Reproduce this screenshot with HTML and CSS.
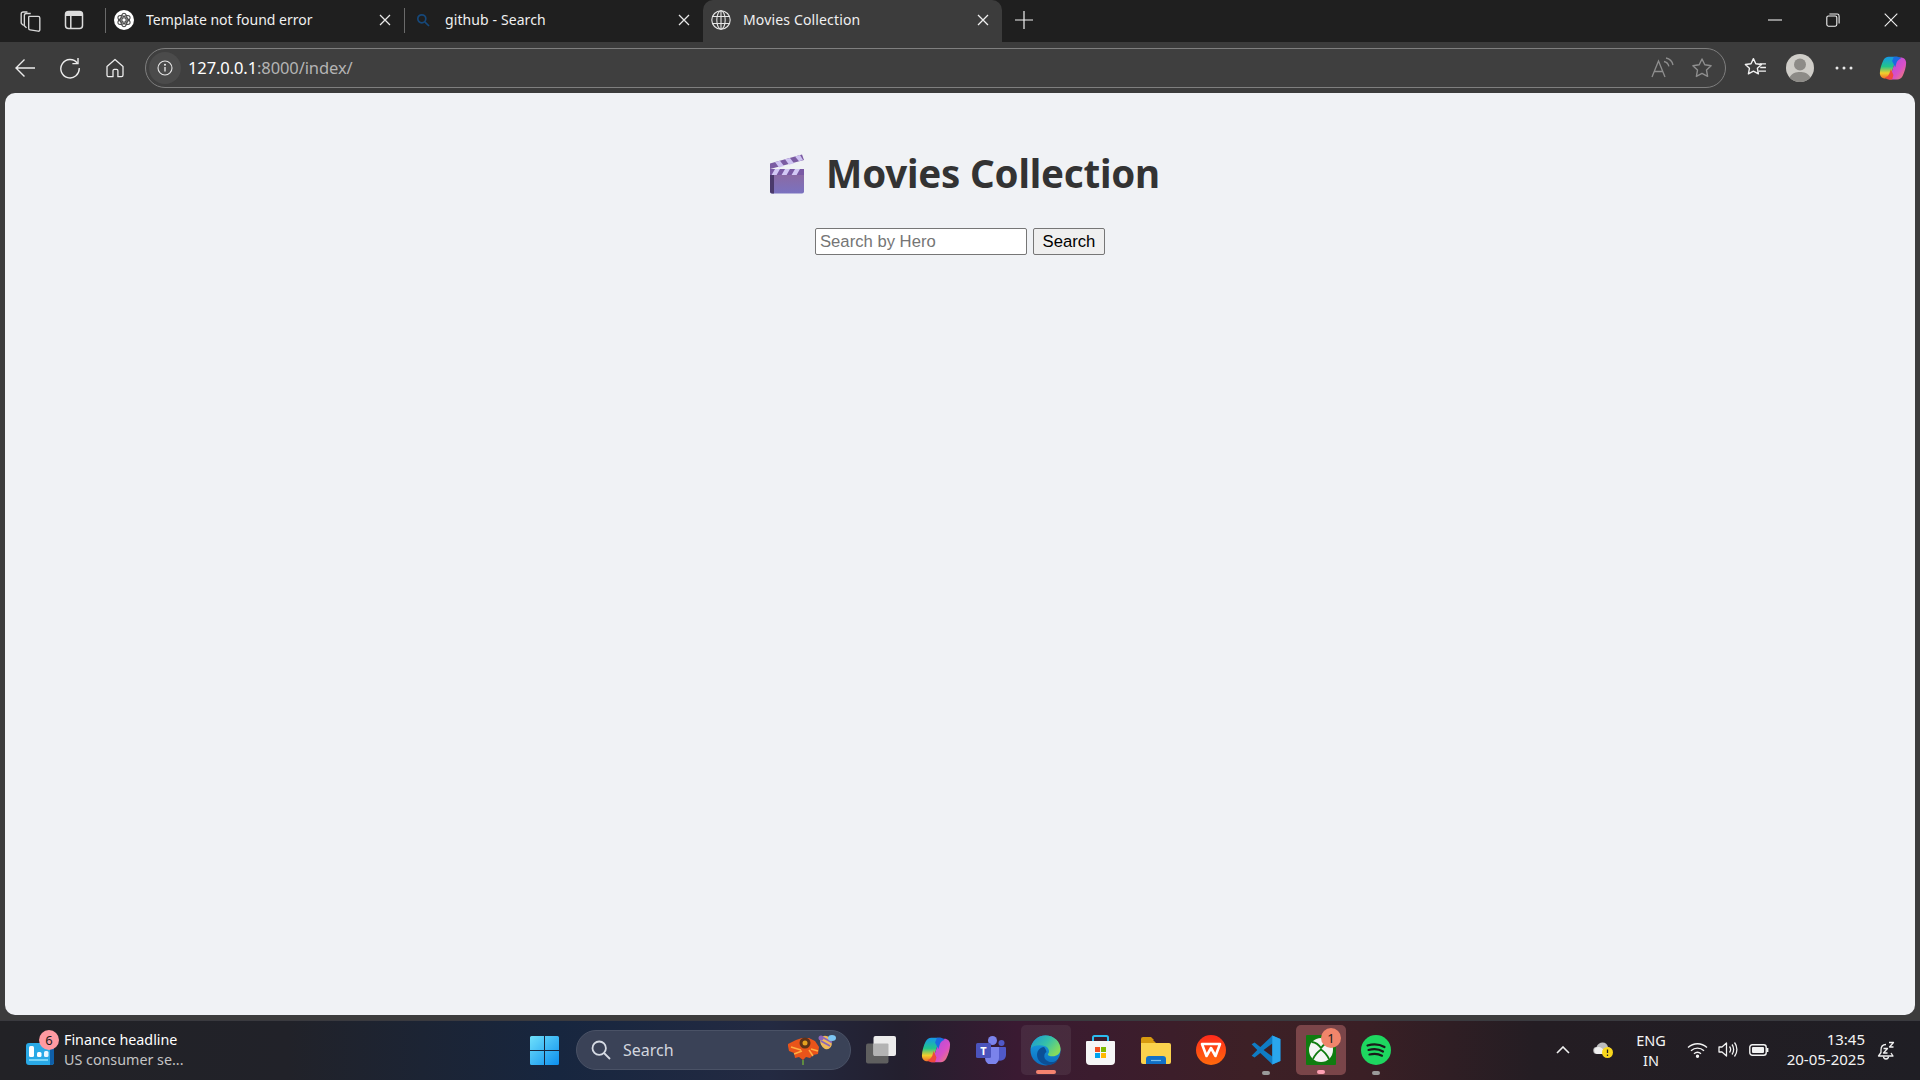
FILE: index.html
```html
<!DOCTYPE html>
<html lang="en">
<head>
<meta charset="utf-8">
<title>Movies Collection</title>
<link rel="stylesheet" href="styles.css">
</head>
<body>
<div class="screen">
  <header class="tabstrip">
    <div class="strip-tools">
      <button class="icon-btn w46"><svg width="25" height="25" viewBox="0 0 22 22" fill="none" stroke="#d8d8d8" stroke-width="1.2" stroke-linejoin="round"><path d="M5 15.5 3.2 13.8a1.4 1.4 0 0 1-.4-1V5.2c0-1 .7-1.700 1.700-1.700h3.800"/><path d="M7.500 17.500 5.600 15.600V6.500c0-1 .7-1.700 1.700-1.700h3.900"/><path d="M9.600 7.400h8.200c.9 0 1.400.5 1.400 1.400v10.300c0 .9-.7 1.400-1.500 1.300l-7-1.100c-.8-.1-1.300-.7-1.300-1.500V8.800c0-.9.1-1.400.2-1.400z"/></svg></button>
      <button class="icon-btn w40"><svg width="20" height="20" viewBox="0 0 20 20"><rect x="1.500" y="1.500" width="17" height="17" rx="3" fill="none" stroke="#dcdcdc" stroke-width="1.500"/><path d="M2 2h16v4H2z" fill="#dcdcdc"/><path d="M6.800 6v12" stroke="#dcdcdc" stroke-width="1.500"/></svg></button>
      <span class="tab-sep first"></span>
    </div>
    <div class="tab tab-one">
      <svg class="favicon" width="20" height="20" viewBox="0 0 20 20"><circle cx="10" cy="10" r="10" fill="#fff"/><g fill="none" stroke="#4a4a4a" stroke-width="1.100"><ellipse cx="10" cy="10" rx="3.300" ry="6.800"/><ellipse cx="10" cy="10" rx="3.300" ry="6.800" transform="rotate(60 10 10)"/><ellipse cx="10" cy="10" rx="3.300" ry="6.800" transform="rotate(120 10 10)"/><circle cx="10" cy="10" r="2.200"/></g></svg>
      <span class="tab-title">Template not found error</span>
      <svg class="tab-close" width="12" height="12" viewBox="0 0 12 12"><path d="M1 1l10 10M11 1 1 11" stroke="#e8e8e8" stroke-width="1.300"/></svg>
    </div>
    <span class="tab-sep"></span>
    <div class="tab tab-two">
      <svg class="favicon-s" width="14" height="14" viewBox="0 0 14 14" fill="none" stroke="#16487a" stroke-width="1.700"><circle cx="5.800" cy="5.800" r="4"/><path d="M8.800 8.800 13 13"/></svg>
      <span class="tab-title">github - Search</span>
      <svg class="tab-close" width="12" height="12" viewBox="0 0 12 12"><path d="M1 1l10 10M11 1 1 11" stroke="#e8e8e8" stroke-width="1.300"/></svg>
    </div>
    <div class="tab tab-active">
      <svg class="favicon" width="20" height="20" viewBox="0 0 20 20" fill="none" stroke="#e6e6e6" stroke-width="1.100"><circle cx="10" cy="10" r="9.200"/><ellipse cx="10" cy="10" rx="4.200" ry="9.200"/><path d="M10 .8v18.400M1.600 6.500h16.800M1.600 13.500h16.800"/></svg>
      <span class="tab-title">Movies Collection</span>
      <svg class="tab-close" width="12" height="12" viewBox="0 0 12 12"><path d="M1 1l10 10M11 1 1 11" stroke="#f0f0f0" stroke-width="1.300"/></svg>
    </div>
    <button class="icon-btn new-tab"><svg width="18" height="18" viewBox="0 0 18 18"><path d="M9 0v18M0 9h18" stroke="#f0f0f0" stroke-width="1.200"/></svg></button>
    <div class="window-controls">
      <button class="icon-btn win"><svg width="14" height="2" viewBox="0 0 14 2"><path d="M0 1h14" stroke="#fff" stroke-width="1"/></svg></button>
      <button class="icon-btn win"><svg width="14" height="14" viewBox="0 0 14 14" fill="none" stroke="#f2f2f2" stroke-width="1.100"><rect x=".8" y="3" width="10" height="10.200" rx="1.600"/><path d="M3.400 1h7.800c1 0 1.900.8 1.900 1.900v7.600"/></svg></button>
      <button class="icon-btn win"><svg width="14" height="14" viewBox="0 0 14 14"><path d="M.7.7l12.600 12.600M13.300.7.7 13.300" stroke="#f2f2f2" stroke-width="1.100"/></svg></button>
    </div>
  </header>

  <nav class="toolbar">
    <button class="icon-btn nav"><svg width="22" height="20" viewBox="0 0 22 20" fill="none" stroke="#ececec" stroke-width="1.400"><path d="M21 10H2M10.500 1.500 2 10l8.500 8.500"/></svg></button>
    <button class="icon-btn nav"><svg width="22" height="22" viewBox="0 0 22 22" fill="none" stroke="#ececec" stroke-width="1.400"><path d="M18.400 6.200A9.200 9.200 0 1 0 20.200 11"/><path d="M19 1v5.600h-5.600"/></svg></button>
    <button class="icon-btn nav"><svg width="20" height="20" viewBox="0 0 20 20" fill="none" stroke="#ececec" stroke-width="1.300" stroke-linejoin="round"><path d="M2 8.400 10 1.500l8 6.900v8.700c0 .9-.7 1.600-1.500 1.600h-3.600v-6a1.300 1.300 0 0 0-1.300-1.300H9.400A1.300 1.300 0 0 0 8 12.700v6H3.500c-.8 0-1.500-.7-1.500-1.600z"/></svg></button>
    <div class="address">
      <span class="info"><svg width="16" height="16" viewBox="0 0 16 16" fill="none" stroke="#e6e6e6" stroke-width="1.100"><circle cx="8" cy="8" r="7"/><path d="M8 7v4.500" stroke-width="1.400"/><circle cx="8" cy="4.700" r=".5" fill="#e6e6e6"/></svg></span>
      <span class="url"><span class="url-host">127.0.0.1</span>:8000/index/</span>
      <span class="addr-actions">
        <svg class="read" width="24" height="22" viewBox="0 0 24 22" fill="none" stroke="#8e8e8e" stroke-width="1.300"><path d="M2 20 8.500 4 15 20M4.500 14.500h8"/><path d="M14 4.500c2.500.6 4.300 2.400 4.900 4.900M16 1c4 .8 6.200 3.200 7 7"/></svg>
        <svg width="22" height="22" viewBox="0 0 22 22" fill="none" stroke="#8e8e8e" stroke-width="1.400" stroke-linejoin="round"><path d="M11 2l2.800 5.800 6.300.9-4.600 4.400 1.100 6.300L11 16.400l-5.600 3 1.100-6.300L1.900 8.700l6.300-.9z"/></svg>
      </span>
    </div>
    <button class="icon-btn fav"><svg width="23" height="21" viewBox="0 0 22 20" fill="none" stroke="#f2f2f2" stroke-width="1.300" stroke-linejoin="round"><path d="M9 1.500l2.300 4.900 5.400.7-3.900 3.700 1 5.300L9 13.500l-4.800 2.600 1-5.300L1.300 7.100l5.400-.7z"/><path d="M15 6.500h6M15.500 10h5.500M14 13.500h7"/></svg></button>
    <span class="avatar"><svg width="28" height="28" viewBox="0 0 28 28"><circle cx="14" cy="14" r="14" fill="#cfcdc8"/><circle cx="14" cy="10.500" r="6" fill="#8d8b87"/><path d="M3.500 23.500C6 19 10 18 14 18s8 1 10.500 5.500A14 14 0 0 1 14 28 14 14 0 0 1 3.500 23.500z" fill="#8d8b87"/></svg></span>
    <button class="icon-btn dots"><svg width="18" height="4" viewBox="0 0 18 4" fill="#e8e8e8"><circle cx="2" cy="2" r="1.500"/><circle cx="9" cy="2" r="1.500"/><circle cx="16" cy="2" r="1.500"/></svg></button>
    <span class="copilot-wrap">
      <svg width="28" height="28" viewBox="0 0 32 32"><defs><linearGradient id="cpa" x1="0" y1="0" x2="0" y2="1"><stop offset="0" stop-color="#1697e8"/><stop offset=".45" stop-color="#22c58b"/><stop offset=".75" stop-color="#f2cf2c"/><stop offset="1" stop-color="#f0702a"/></linearGradient><linearGradient id="cpb" x1="0" y1="0" x2="1" y2="1"><stop offset="0" stop-color="#a64fe0"/><stop offset=".6" stop-color="#d94fc8"/><stop offset="1" stop-color="#f08a5c"/></linearGradient></defs><path d="M11 3h10l-2 4-5 15c-1.500 4-3.500 6-7 6-3.500 0-6-2.500-6-6 0-5 2-11 4-15 1.200-2.500 3.500-4 6-4z" fill="url(#cpa)"/><path d="M21 29H11l2-4 5-15c1.500-4 3.500-6 7-6 3.500 0 6 2.500 6 6 0 5-2 11-4 15-1.200 2.500-3.500 4-6 4z" fill="url(#cpb)"/><path d="M17 3h4c1.800 0 3.400 1 4 2.400-2.500.4-4 2.300-5 4.600l-1.500 5L15 8z" fill="#1b6be0"/><path d="M15 29h-4c-1.800 0-3.400-1-4-2.400 2.500-.4 4-2.300 5-4.600l1.500-5 3 7z" fill="#ef4a3c"/></svg>
    </span>
  </nav>

  <div class="viewport">
    <main class="page">
      <h1 class="title">
        <svg class="clapper" width="34" height="40" viewBox="0 0 34 40"><defs><linearGradient id="clb" x1="0" y1="0" x2="0" y2="1"><stop offset="0" stop-color="#8a6aa4"/><stop offset="1" stop-color="#7a72c0"/></linearGradient></defs><path d="M0 9.500 32 .5l2 5.500L0 15z" fill="#7b5ba2"/><path d="M5 8.100l5-1.400 4 5.400-5 1.400zM15 5.300l5-1.400 4 5.400-5 1.400zM25 2.500l5-1.400 3 4.800-4 1.400z" fill="#cfc3f2"/><path d="M0 15h34v7H0z" fill="#7a5aa4"/><path d="M5 15h5l-4 7H1zM15 15h5l-4 7h-5zM25 15h5l-4 7h-5z" fill="#d3c8f5"/><path d="M0 21h34v16.500a2 2 0 0 1-2 2H2a2 2 0 0 1-2-2z" fill="url(#clb)"/><path d="M0 21h4v18.500H2a2 2 0 0 1-2-2z" fill="#4b3a6c"/></svg>
        <span>Movies Collection</span>
      </h1>
      <form class="search-form">
        <input class="search-input" type="text" placeholder="Search by Hero">
        <button class="search-btn" type="button">Search</button>
      </form>
    </main>
  </div>

  <footer class="taskbar">
    <div class="tb-left">
      <span class="widget-icon">
        <svg width="28" height="22" viewBox="0 0 28 22"><rect width="28" height="22" rx="3" fill="#29a9e6"/><path d="M24 0h1a3 3 0 0 1 3 3v16a3 3 0 0 1-3 3h-1z" fill="#0f5fa8"/><rect x="3" y="3" width="5" height="11" rx="1.500" fill="#fff"/><rect x="11" y="9" width="4.500" height="5" rx="1.500" fill="#fff"/><rect x="18" y="8" width="4.500" height="6" rx="1.500" fill="#e8f6ff"/><rect x="3" y="16" width="19" height="2" fill="#79d5f7"/></svg>
        <span class="badge badge-six">6</span>
      </span>
      <span class="news">
        <span class="news-head">Finance headline</span>
        <span class="news-sub">US consumer se...</span>
      </span>
    </div>
    <div class="tb-center">
      <span class="tb-item"><svg width="29" height="29" viewBox="0 0 29 29"><defs><linearGradient id="winl" x1="0" y1="0" x2="1" y2="1"><stop offset="0" stop-color="#6fe0fb"/><stop offset="1" stop-color="#0c8fee"/></linearGradient></defs><path d="M0 1.500A1.500 1.500 0 0 1 1.500 0H14v14H0zM15 0h12.500A1.500 1.500 0 0 1 29 1.500V14H15zM0 15h14v14H1.500A1.500 1.500 0 0 1 0 27.500zM15 15h14v12.500a1.500 1.500 0 0 1-1.500 1.500H15z" fill="url(#winl)"/></svg></span>
      <div class="tb-search">
        <svg width="20" height="20" viewBox="0 0 20 20" fill="none" stroke="#d6dbe4" stroke-width="1.800"><circle cx="8.200" cy="8.200" r="6.700"/><path d="M13 13l6 6"/></svg>
        <span class="tb-search-text">Search</span>
        <svg class="tb-search-art" width="50" height="30" viewBox="0 0 50 30"><path d="M0 9 8 5l6-2h7l6 3 4 6 -1 7-5 1-3 3-4-1-3 3-4-3-4 1-1-5-5-2-1-5z" fill="#e9541a"/><path d="M3 12l10 3M6 19l8-3M25 21l-4-6M30 16l-7-2" stroke="#ffae42" stroke-width="1.500"/><circle cx="17" cy="8" r="5.500" fill="#5e3218"/><circle cx="17" cy="8" r="2.500" fill="#e5a21f"/><path d="M15 25v5" stroke="#6da53a" stroke-width="1.500"/><ellipse cx="38" cy="7.500" rx="5.500" ry="7" fill="#efb95a" transform="rotate(-25 38 7.500)"/><path d="M33 6l9 5M35 2.500l9 5" stroke="#8a66bb" stroke-width="1.800"/><ellipse cx="44" cy="3" rx="4" ry="3" fill="#7cc5f2"/><circle cx="33" cy="3" r="2.500" fill="#8a66bb"/></svg>
      </div>
      <span class="tb-item tb-view"><svg width="30" height="28" viewBox="0 0 30 28"><rect x="0" y="7.500" width="22.500" height="20" rx="2" fill="#5f5f5f"/><rect x="7.500" y="0" width="22.500" height="20" rx="2" fill="#ececec"/><rect x="7.500" y="7.500" width="15" height="12.500" rx="1" fill="#b3b3b3"/></svg></span>
      <span class="tb-item"><svg width="30" height="30" viewBox="0 0 32 32"><defs><linearGradient id="cpc" x1="0" y1="0" x2="0" y2="1"><stop offset="0" stop-color="#1697e8"/><stop offset=".45" stop-color="#22c58b"/><stop offset=".75" stop-color="#f2cf2c"/><stop offset="1" stop-color="#f0702a"/></linearGradient><linearGradient id="cpd" x1="0" y1="0" x2="1" y2="1"><stop offset="0" stop-color="#a64fe0"/><stop offset=".6" stop-color="#d94fc8"/><stop offset="1" stop-color="#f08a5c"/></linearGradient></defs><path d="M11 3h10l-2 4-5 15c-1.500 4-3.500 6-7 6-3.500 0-6-2.500-6-6 0-5 2-11 4-15 1.200-2.500 3.500-4 6-4z" fill="url(#cpc)"/><path d="M21 29H11l2-4 5-15c1.500-4 3.500-6 7-6 3.500 0 6 2.500 6 6 0 5-2 11-4 15-1.200 2.500-3.500 4-6 4z" fill="url(#cpd)"/><path d="M17 3h4c1.800 0 3.400 1 4 2.400-2.500.4-4 2.300-5 4.600l-1.500 5L15 8z" fill="#1b6be0"/><path d="M15 29h-4c-1.800 0-3.400-1-4-2.400 2.500-.4 4-2.300 5-4.600l1.500-5 3 7z" fill="#ef4a3c"/></svg></span>
      <span class="tb-item"><svg width="30" height="28" viewBox="0 0 30 28"><circle cx="16.500" cy="4.500" r="4.500" fill="#7b83eb"/><circle cx="25.500" cy="7" r="3" fill="#5059c9"/><path d="M21 11h8a1 1 0 0 1 1 1v7a6 6 0 0 1-9 5z" fill="#5059c9"/><path d="M9 11h14v11a7 7 0 0 1-14 0z" fill="#7b83eb"/><rect x="0" y="7" width="15" height="15" rx="1.500" fill="#4b53bc"/><text x="7.500" y="19" class="teams-t">T</text></svg></span>
      <span class="tb-item tb-active">
        <svg width="31" height="31" viewBox="0 0 32 32"><defs><linearGradient id="eg" x1="0" y1="0" x2="1" y2=".6"><stop offset="0" stop-color="#1a95d8"/><stop offset=".55" stop-color="#35c1a8"/><stop offset="1" stop-color="#86dc5c"/></linearGradient><linearGradient id="eb" x1="0" y1="0" x2="0" y2="1"><stop offset="0" stop-color="#1ca4e4"/><stop offset="1" stop-color="#0b6ec0"/></linearGradient></defs><circle cx="16" cy="16" r="15.500" fill="url(#eb)"/><path d="M.8 14C2 6 8 .5 16 .5c9 0 15.500 6.500 15.500 14 0 5-4 7.500-8 7.500-3 0-5.500-1-5-2.500 2-1.500 1.500-6-2.500-8C11 10 3 10 .8 14z" fill="url(#eg)"/><path d="M14.500 12.500c-5 .5-8 5-7 10 1 5 6 9 12.500 8.500 3.500-.5 6.500-2 8.500-5-3 2-7 2.500-10 1-3-1.500-4.500-4-3.500-7 .3-1 1-2 2-2.500-.5-2-1.500-4-2.500-5z" fill="#0b4f96"/></svg>
        <span class="run-bar run-edge"></span>
      </span>
      <span class="tb-item"><svg width="29" height="30" viewBox="0 0 29 30"><path d="M7 6V2.500A1.500 1.500 0 0 1 8.500 1h12A1.500 1.500 0 0 1 22 2.500V6" fill="none" stroke="#2bbcf0" stroke-width="2"/><path d="M1 6h27a1 1 0 0 1 1 1v19a4 4 0 0 1-4 4H4a4 4 0 0 1-4-4V7a1 1 0 0 1 1-1z" fill="#f6f6f6"/><path d="M9 12h5v5H9z" fill="#f25022"/><path d="M15 12h5v5h-5z" fill="#7fba00"/><path d="M9 18h5v5H9z" fill="#00a4ef"/><path d="M15 18h5v5h-5z" fill="#ffb900"/></svg></span>
      <span class="tb-item"><svg width="30" height="27" viewBox="0 0 30 27"><path d="M0 2a2 2 0 0 1 2-2h8l3 3h-13z" fill="#d79a10"/><path d="M0 3h12l3 3H0z" fill="#d79a10"/><path d="M0 6h28a2 2 0 0 1 2 2v17a2 2 0 0 1-2 2H2a2 2 0 0 1-2-2z" fill="#fad24d"/><path d="M5 27v-5a3 3 0 0 1 3-3h14a3 3 0 0 1 3 3v5z" fill="#1170c6"/><path d="M10 23.500h10" stroke="#79c0ef" stroke-width="1.200"/></svg></span>
      <span class="tb-item"><svg width="30" height="30" viewBox="0 0 30 30"><defs><linearGradient id="wp" x1="0" y1="0" x2="0" y2="1"><stop offset="0" stop-color="#ff2a1c"/><stop offset="1" stop-color="#ff6a0c"/></linearGradient></defs><circle cx="15" cy="15" r="15" fill="url(#wp)"/><path d="M6 9h18l-4.500 12L15 13l-4.500 8z" fill="none" stroke="#fff" stroke-width="2.600" stroke-linejoin="round"/></svg></span>
      <span class="tb-item"><svg width="30" height="30" viewBox="0 0 100 100"><path d="M71 2 31 40 12 25 2 31l19 19L2 69l10 6 19-15 40 38 27-11V13z M71 28 42 50l29 22z" fill="#0f7cc4" fill-rule="evenodd"/><path d="M71 2l27 11v74L71 98z" fill="#2aa6ee"/></svg><span class="run-bar run-grey"></span></span>
      <span class="tb-item tb-open">
        <svg width="30" height="30" viewBox="0 0 30 30"><rect width="30" height="30" rx="1" fill="#107c10"/><circle cx="15" cy="15" r="12" fill="#f5f5f5"/><path d="M6 7c3.500.5 7 3 9 6 2-3 5.500-5.500 9-6M7 24c2-4 5-7.500 8-9.500 3 2 6 5.500 8 9.500" fill="none" stroke="#107c10" stroke-width="1.800"/></svg>
        <span class="badge badge-one">1</span>
        <span class="run-bar run-pink"></span>
      </span>
      <span class="tb-item"><svg width="30" height="30" viewBox="0 0 30 30"><circle cx="15" cy="15" r="15" fill="#1ed760"/><path d="M6.500 10.500c6-1.800 12-1.300 17 1.500M7.500 15c5-1.400 10.500-1 14.500 1.500M8.500 19.500c4.500-1.100 9-.8 12.500 1.200" fill="none" stroke="#1a1a1a" stroke-width="2.200" stroke-linecap="round"/></svg><span class="run-bar run-grey"></span></span>
    </div>
    <div class="tb-right">
      <span class="tray chevron"><svg width="14" height="8" viewBox="0 0 14 8" fill="none" stroke="#f0f0f0" stroke-width="1.600"><path d="M1 7l6-6 6 6"/></svg></span>
      <span class="tray onedrive"><svg width="20" height="16" viewBox="0 0 20 16"><path d="M4 12a3.500 3.500 0 0 1-.5-7C4.500 2 7 .5 9.500.5c3 0 5 2 5.500 4.500 2 .3 3.500 1.500 3.500 3.500 0 2-1.500 3.500-3.500 3.500z" fill="#bdbdbd"/><path d="M3 5.500c3-1.500 7 0 8.500 4l-1 2.500H4a3.500 3.500 0 0 1-1-6.500z" fill="#efefef"/><circle cx="14.500" cy="10.500" r="5.500" fill="#f9d71c"/><path d="M14.500 7.500v3.500M14.500 12.500v1.500" stroke="#222" stroke-width="1.300"/></svg></span>
      <span class="lang"><span>ENG</span><span>IN</span></span>
      <span class="tray wifi"><svg width="21" height="16" viewBox="0 0 21 16" fill="none" stroke="#f2f2f2" stroke-width="1.400"><path d="M1 5.500c5.500-5 13.500-5 19 0M4 8.700c3.800-3.400 9.200-3.400 13 0M7 11.700c2-1.700 5-1.700 7 0"/><circle cx="10.500" cy="14.300" r="1" fill="#f2f2f2"/></svg></span>
      <span class="tray vol"><svg width="20" height="17" viewBox="0 0 20 17" fill="none" stroke="#f2f2f2" stroke-width="1.300" stroke-linejoin="round"><path d="M1 6v5h3l4.500 4V2L4 6z"/><path d="M11.500 5.500c1.300 1.700 1.300 4.300 0 6M14 3.500c2.200 2.800 2.200 7.200 0 10M16.500 1.500c3.200 4 3.200 10 0 14"/></svg></span>
      <span class="tray batt"><svg width="20" height="12" viewBox="0 0 20 12"><rect x=".8" y=".8" width="16.400" height="10.400" rx="2.500" fill="none" stroke="#f2f2f2" stroke-width="1.400"/><rect x="3" y="3" width="12" height="6" rx="1" fill="#f2f2f2"/><path d="M18.500 4v4" stroke="#f2f2f2" stroke-width="1.800"/></svg></span>
      <span class="clock"><span>13:45</span><span>20-05-2025</span></span>
      <span class="tray bell"><svg width="18" height="20" viewBox="0 0 18 20" fill="none" stroke="#f0f0f0" stroke-width="1.300" stroke-linejoin="round"><path d="M9 3.500C5.500 3.500 4 6 4 9v2.500L1.500 15h14.500L14 12"/><path d="M6.500 15.500c0 3.300 5 3.300 5 0"/><path d="M6.500 7.500h4l-4 4.500h4M12 1.500h4.500l-4 4.500h4"/></svg></span>
    </div>
  </footer>
</div>
</body>
</html>
```

FILE: styles.css
```css
* { box-sizing: border-box; }

html, body {
  margin: 0;
  height: 100%;
  overflow: hidden;
}

body {
  font-family: "Noto Sans", "Open Sans", sans-serif;
  background: #202020;
}

button {
  font: inherit;
  border: 0;
  background: none;
  padding: 0;
}

svg { display: block; flex: none; }

.screen {
  display: flex;
  flex-direction: column;
  width: 1920px;
  height: 1080px;
}

/* Tab strip */
.tabstrip {
  display: flex;
  align-items: center;
  height: 42px;
  flex: none;
  background: #1f1f1f;
  color: #f0f0f0;
}

.icon-btn {
  display: flex;
  align-items: center;
  justify-content: center;
}

.strip-tools {
  display: flex;
  align-items: center;
  height: 100%;
  padding: 0 0 2px 7px;
}

.w46 { width: 46px; }
.w40 { width: 42px; }

.tab-sep {
  width: 1px;
  height: 25px;
  margin-bottom: 2px;
  background: #6a6a6a;
  flex: none;
}

.strip-tools .tab-sep { margin: 0 5px 0 10px; }

.tab {
  display: flex;
  align-items: center;
  height: 100%;
  padding-bottom: 3px;
  font-size: 14px;
}

.tab-one {
  width: 293px;
  padding-right: 13px;
  padding-left: 3px;
}

.tab-two {
  width: 298px;
  padding-right: 13px;
  padding-left: 11px;
  letter-spacing: 0.1px;
}

.tab-active {
  width: 299px;
  padding-right: 13px;
  padding-left: 8px;
  background: #3c3c3c;
  border-radius: 10px 10px 0 0;
  letter-spacing: 0.15px;
}

.favicon { margin-right: 12px; }
.favicon-s { margin-right: 15px; }

.tab-title {
  flex: 1;
  white-space: nowrap;
  overflow: hidden;
}

.new-tab { width: 44px; padding-bottom: 2px; }

.window-controls {
  display: flex;
  margin-left: auto;
}

.win { width: 58px; height: 42px; padding-bottom: 2px; }

/* Toolbar */
.toolbar {
  display: flex;
  align-items: center;
  height: 51px;
  flex: none;
  background: #3c3c3c;
  padding-left: 2px;
}

.nav { width: 45px; height: 40px; }

.address {
  display: flex;
  align-items: center;
  width: 1581px;
  height: 40px;
  margin-left: 8px;
  border: 1.5px solid #7f7f7f;
  border-radius: 20px;
  background: #3f3f3f;
}

.info {
  display: flex;
  align-items: center;
  justify-content: center;
  width: 32px;
  height: 32px;
  margin-left: 3px;
  border-radius: 50%;
  background: #4b4b4b;
}

.url {
  margin-left: 7px;
  font-size: 16.5px;
  letter-spacing: -0.1px;
  color: #b4b4b4;
}

.url-host { color: #fff; }

.addr-actions {
  display: flex;
  align-items: center;
  gap: 17px;
  margin-left: auto;
  padding-right: 12px;
}

.fav { width: 58px; height: 40px; }

.avatar { margin-left: 2px; }

.dots { width: 60px; height: 40px; }

.copilot-wrap { margin-left: 5px; }

/* Page */
.viewport {
  flex: 1;
  min-height: 0;
  padding: 0 5px 5px;
  background: #3c3c3c;
}

.page {
  height: 100%;
  background: #f0f2f5;
  border-radius: 10px;
  padding-top: 59px;
}

.title {
  display: flex;
  align-items: center;
  justify-content: center;
  margin: 0;
  padding-left: 10px;
  gap: 22px;
  font-family: "Noto Sans", sans-serif;
  font-size: 38.5px;
  line-height: 40px;
  font-weight: 700;
  letter-spacing: -0.2px;
  color: #333;
}

.clapper { margin-top: 2px; }

.search-form {
  display: flex;
  justify-content: center;
  gap: 6px;
  margin-top: 34px;
}

.search-input {
  width: 212px;
  height: 27px;
  padding: 1px 4px;
  border: 1px solid #767676;
  border-radius: 2px;
  background: #fff;
  font: 16.67px "Liberation Sans", Arial, sans-serif;
  color: #000;
}

.search-input::placeholder { color: #757575; opacity: 1; }

.search-btn {
  width: 72px;
  height: 27px;
  border: 1px solid #767676;
  border-radius: 2px;
  background: #efefef;
  font: 16.67px "Liberation Sans", Arial, sans-serif;
  color: #000;
}

/* Taskbar */
.taskbar {
  display: flex;
  align-items: center;
  height: 60px;
  flex: none;
  border-top: 1px solid #3a3a3f;
  background: linear-gradient(90deg, #222226 0%, #212229 15%, #17263f 29%, #232a42 40%, #231f2e 47%, #3a1a32 53%, #3d2026 65%, #3a1f25 71%, #241d23 80%, #1f1e24 100%);
  color: #fff;
}

.tb-left {
  display: flex;
  align-items: center;
  width: 517px;
  padding-left: 26px;
  flex: none;
}

.widget-icon {
  position: relative;
  display: block;
  width: 28px;
  height: 22px;
  margin-top: 6px;
}

.badge {
  position: absolute;
  display: flex;
  align-items: center;
  justify-content: center;
  width: 20px;
  height: 20px;
  border-radius: 50%;
  font-size: 13px;
  color: #1a1a1a;
}

.badge-six { left: 13px; top: -13px; background: #ff9aa2; }
.badge-one { left: 28px; top: 3px; background: #f0856b; }

.news {
  display: flex;
  flex-direction: column;
  margin-left: 10px;
  margin-bottom: 2px;
  font-size: 14.3px;
  line-height: 20px;
}

.news-head { color: #fff; }
.news-sub { color: #c4c4c4; }

.tb-center {
  display: flex;
  align-items: center;
  flex: none;
  margin-bottom: 1px;
}

.tb-item {
  position: relative;
  display: flex;
  align-items: center;
  justify-content: center;
  width: 55px;
  height: 50px;
  flex: none;
}

.tb-active::before,
.tb-open::before {
  content: "";
  position: absolute;
  left: 2.5px;
  right: 2.5px;
  top: 0;
  bottom: 0;
  border-radius: 5px;
}

.tb-active::before { background: rgba(255, 255, 255, 0.07); }
.tb-open::before { background: rgba(255, 150, 150, 0.32); }

.tb-item svg { position: relative; }

.run-bar {
  position: absolute;
  left: 50%;
  bottom: 1px;
  height: 4px;
  border-radius: 2px;
  transform: translateX(-50%);
}

.run-edge { width: 20px; background: #f4836f; }
.run-grey { width: 8px; background: #9a9a9a; bottom: 0; }
.run-pink { width: 8px; background: #ffa0b4; }

.teams-t {
  font: 700 11px "Noto Sans", sans-serif;
  fill: #fff;
  text-anchor: middle;
}

.tb-search {
  display: flex;
  align-items: center;
  width: 275px;
  height: 40px;
  margin: 0 2px 0 4px;
  padding: 0 10px 0 14px;
  border: 1px solid #4a5266;
  border-radius: 20px;
  background: #3a4257;
}

.tb-search-text {
  margin-left: 12px;
  font-size: 16px;
  color: #d2d6de;
}

.tb-search-art { margin-left: auto; margin-right: 2px; }

.tb-right {
  display: flex;
  align-items: center;
  margin-left: auto;
  height: 100%;
  padding-bottom: 2px;
  font-size: 14.5px;
  line-height: 20px;
  color: #f4f4f4;
}

.tray { display: flex; align-items: center; justify-content: center; }

.chevron { width: 14px; margin-right: 23px; }
.onedrive { width: 20px; margin-right: 18px; }

.lang {
  display: flex;
  flex-direction: column;
  align-items: center;
  width: 40px;
  margin-right: 16px;
}

.wifi { width: 21px; margin-right: 10px; }
.vol { width: 20px; margin-right: 11px; }
.batt { width: 20px; margin-right: 6px; }

.clock {
  display: flex;
  flex-direction: column;
  align-items: flex-end;
  width: 90px;
  margin-bottom: 2px;
  font-size: 15px;
}

.bell { width: 18px; margin: 2px 25px 0 12px; }
```
